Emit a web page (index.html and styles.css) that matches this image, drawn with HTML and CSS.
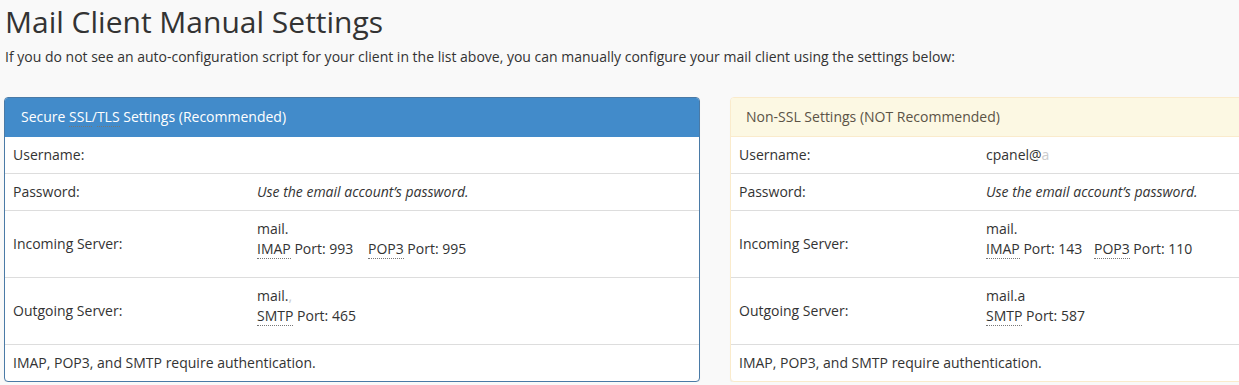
FILE: index.html
```html
<!DOCTYPE html>
<html lang="en">
<head>
<meta charset="utf-8">
<title>Mail Client Manual Settings</title>
<link rel="stylesheet" href="styles.css">
</head>
<body>
<div class="page">
  <h1 class="title">Mail Client Manual Settings</h1>
  <p class="intro">If you do not see an auto-configuration script for your client in the list above, you can manually configure your mail client using the settings below:</p>
  <div class="panels">
    <section class="panel panel-primary">
      <div class="panel-heading">Secure <abbr title="Secure Sockets Layer">SSL</abbr>/<abbr title="Transport Layer Security">TLS</abbr> Settings (Recommended)</div>
      <div class="row">
        <div class="label">Username:</div>
        <div class="value"></div>
      </div>
      <div class="row">
        <div class="label">Password:</div>
        <div class="value"><em>Use the email account’s password.</em></div>
      </div>
      <div class="row">
        <div class="label">Incoming Server:</div>
        <div class="value multi">
          <div>mail.</div>
          <div><abbr title="Internet Message Access Protocol">IMAP</abbr> Port: 993 <span class="port2"><abbr title="Post Office Protocol 3">POP3</abbr> Port: 995</span></div>
        </div>
      </div>
      <div class="row">
        <div class="label">Outgoing Server:</div>
        <div class="value multi">
          <div>mail.<span class="faint">,</span></div>
          <div><abbr title="Simple Mail Transfer Protocol">SMTP</abbr> Port: 465</div>
        </div>
      </div>
      <div class="row footer">IMAP, POP3, and SMTP require authentication.</div>
    </section>
    <section class="panel panel-warning">
      <div class="panel-heading">Non-SSL Settings (NOT Recommended)</div>
      <div class="row">
        <div class="label">Username:</div>
        <div class="value">cpanel@<span class="faint">a</span></div>
      </div>
      <div class="row">
        <div class="label">Password:</div>
        <div class="value"><em>Use the email account’s password.</em></div>
      </div>
      <div class="row">
        <div class="label">Incoming Server:</div>
        <div class="value multi">
          <div>mail.</div>
          <div><abbr title="Internet Message Access Protocol">IMAP</abbr> Port: 143 <span class="port2"><abbr title="Post Office Protocol 3">POP3</abbr> Port: 110</span></div>
        </div>
      </div>
      <div class="row">
        <div class="label">Outgoing Server:</div>
        <div class="value multi">
          <div>mail.a</div>
          <div><abbr title="Simple Mail Transfer Protocol">SMTP</abbr> Port: 587</div>
        </div>
      </div>
      <div class="row footer">IMAP, POP3, and SMTP require authentication.</div>
    </section>
  </div>
</div>
</body>
</html>
```

FILE: styles.css
```css
html, body {
  margin: 0;
  padding: 0;
  overflow: hidden;
  background: #f9f9f9;
}

body {
  font-family: "Open Sans", "Liberation Sans", sans-serif;
  font-size: 14px;
  line-height: 20px;
  color: #333;
}

.page {
  padding: 5px 0 0 4px;
  width: 1500px;
}

.title {
  margin: 0 0 0 1px;
  font-size: 30px;
  line-height: 33px;
  font-weight: 400;
  color: #333;
}

.intro {
  margin: 9px 0 0 1px;
  font-size: 14px;
  line-height: 20px;
}

.panels {
  display: flex;
  gap: 30px;
  margin-top: 30px;
}

.panel {
  flex: 0 0 696px;
  box-sizing: border-box;
  background: #fff;
  border: 1px solid #ddd;
  border-radius: 4px;
  box-shadow: 0 1px 1px rgba(0, 0, 0, 0.05);
  overflow: hidden;
}

.panel-heading {
  padding: 9px 15px;
  line-height: 20px;
  border-bottom: 1px solid transparent;
}

.panel-primary {
  border-color: #4a7aa6;
}

.panel-primary .panel-heading {
  background: #428bca;
  border-bottom-color: #428bca;
  color: #fff;
  padding-left: 16px;
}

.panel-warning {
  border-color: #faebcc;
}

.panel-warning .panel-heading {
  background: #fcf8e3;
  border-bottom-color: #faebcc;
  color: #5b5346;
}

.row {
  display: grid;
  grid-template-columns: 244px 1fr;
  align-items: center;
  border-top: 1px solid #ddd;
}

.panel-heading + .row {
  border-top: 0;
}

.panel-warning .row {
  grid-template-columns: 247px 1fr;
}

.label,
.value {
  padding: 8px;
  min-height: 20px;
}

.value.multi {
  padding-bottom: 18px;
}

.footer {
  display: block;
  padding: 8px;
}

em {
  font-style: italic;
}

abbr {
  text-decoration: none;
  border-bottom: 1px dotted #777;
  cursor: help;
}

.port2 {
  margin-left: 11px;
}

.panel-warning .port2 {
  margin-left: 8px;
}

.faint {
  color: #ccc;
}
```
